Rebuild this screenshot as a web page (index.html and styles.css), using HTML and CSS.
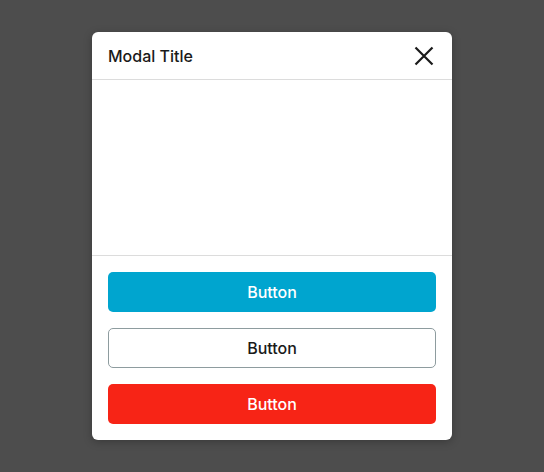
FILE: index.html
```html
<!DOCTYPE html>
<html>
<head>
<meta charset="utf-8">
<link rel="stylesheet" href="styles.css">
</head>
<body>
<div class="overlay">
  <div class="modal">
    <div class="modal-header">
      <span class="modal-title">Modal Title</span>
      <button class="close" aria-label="Close">
        <svg width="24" height="24" viewBox="0 0 24 24"><path d="M3.5 3.5L20.5 20.5M20.5 3.5L3.5 20.5" stroke="#1a1a1a" stroke-width="2.2" stroke-linecap="butt" fill="none"/></svg>
      </button>
    </div>
    <div class="modal-body"></div>
    <div class="modal-footer">
      <button class="btn btn-primary">Button</button>
      <button class="btn btn-outline">Button</button>
      <button class="btn btn-danger">Button</button>
    </div>
  </div>
</div>
</body>
</html>
```
FILE: styles.css
```css
html, body {
  margin: 0;
  padding: 0;
  height: 100%;
}
body {
  background: #4d4d4d;
  font-family: Inter, "Noto Sans", sans-serif;
}
.overlay {
  display: flex;
  justify-content: center;
  padding-top: 32px;
}
.modal {
  width: 360px;
  background: #fff;
  border-radius: 6px;
  box-shadow: 0 2px 8px rgba(0,0,0,0.25);
  display: flex;
  flex-direction: column;
}
.modal-header {
  height: 47px;
  border-bottom: 1px solid #dcdcdc;
  display: flex;
  align-items: center;
  justify-content: space-between;
  padding: 0 16px;
}
.modal-title {
  font-size: 16px;
  font-weight: 500;
  color: #1a1a1a;
}
.close {
  background: none;
  border: none;
  padding: 0;
  width: 24px;
  height: 24px;
  display: flex;
  cursor: pointer;
}
.modal-body {
  height: 175px;
  border-bottom: 1px solid #dcdcdc;
}
.modal-footer {
  padding: 16px;
  display: flex;
  flex-direction: column;
  gap: 16px;
}
.btn {
  height: 40px;
  border-radius: 5px;
  font-family: Inter, "Noto Sans", sans-serif;
  font-size: 16px;
  font-weight: 500;
  border: none;
  cursor: pointer;
}
.btn-primary {
  background: #00a5cf;
  color: #fff;
}
.btn-outline {
  background: #fff;
  color: #1a1a1a;
  border: 1px solid #8e9c9f;
}
.btn-danger {
  background: #f72416;
  color: #fff;
}
```
